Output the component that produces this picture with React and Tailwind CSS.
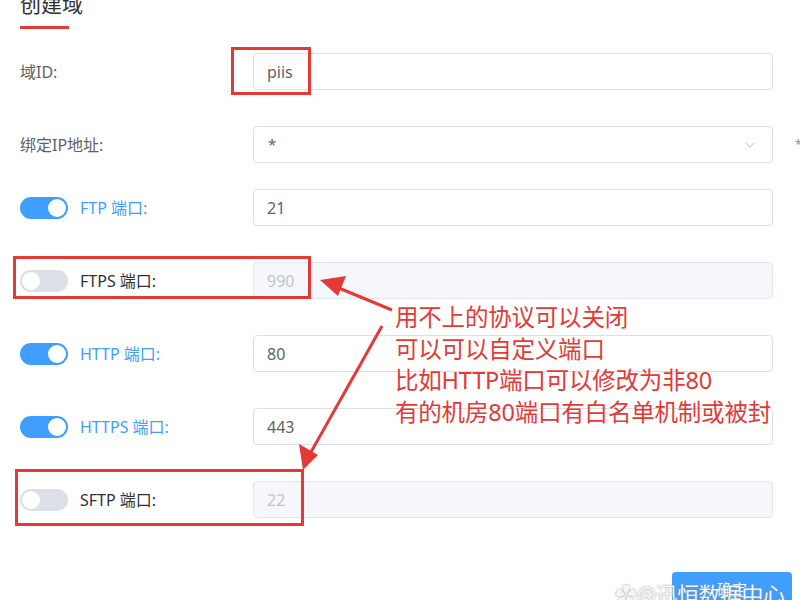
import { ChevronDown } from 'lucide-react'

const font = { fontFamily: '"Noto Sans", "Noto Sans CJK SC", sans-serif' }

const ports = [
  { label: 'FTP 端口:', value: '21', on: true },
  { label: 'FTPS 端口:', value: '990', on: false },
  { label: 'HTTP 端口:', value: '80', on: true },
  { label: 'HTTPS 端口:', value: '443', on: true },
  { label: 'SFTP 端口:', value: '22', on: false },
]

function Toggle({ on }) {
  return (
    <div
      className={`w-[48px] h-[22px] rounded-full flex items-center px-[2px] ${
        on ? 'bg-[#409eff] justify-end' : 'bg-[#dcdfe6] justify-start'
      }`}
    >
      <div className="w-[18px] h-[18px] rounded-full bg-white" />
    </div>
  )
}

function Row({ children, label, className = '' }) {
  return (
    <div className={`flex items-center h-[37px] ${className}`}>
      <div className="w-[233px] flex items-center shrink-0">{label}</div>
      {children}
    </div>
  )
}

export default function App() {
  return (
    <div className="relative w-[800px] h-[600px] overflow-hidden bg-white text-[#606266]" style={font}>
      <div className="pl-5 pr-[27px]">
        {/* 标题 */}
        <div className="-mt-[10px]">
          <h1 className="text-[21px] leading-[28px] text-[#303133]">创建域</h1>
          <div className="w-[49px] h-[3px] bg-[#e53935] mt-[8px]" />
        </div>

        <div className="flex flex-col gap-[36px] mt-[24px]">
          <Row label={<span className="text-[16px]">域ID:</span>}>
            <div className="flex-1 h-full border border-[#dcdfe6] rounded flex items-center px-[13px] text-[16px] text-[#606266]">
              piis
            </div>
          </Row>

          <Row className="-mb-[10px]" label={<span className="text-[16px]">绑定IP地址:</span>}>
            <div className="flex-1 h-full border border-[#dcdfe6] rounded flex items-center justify-between pl-[14px] pr-[14px] text-[15px]">
              <span>*</span>
              <ChevronDown size={16} strokeWidth={1.5} className="text-[#c0c4cc]" />
            </div>
          </Row>

          {ports.map((p) => (
            <Row
              key={p.label}
              label={
                <div className="flex items-center gap-3">
                  <Toggle on={p.on} />
                  <span className={`text-[16px] ${p.on ? 'text-[#409eff]' : 'text-[#303133]'}`}>{p.label}</span>
                </div>
              }
            >
              <div
                className={`flex-1 h-full border rounded flex items-center px-[13px] text-[16px] ${
                  p.on ? 'border-[#dcdfe6] bg-white text-[#606266]' : 'border-[#e4e7ed] bg-[#f5f7fa] text-[#c0c4cc]'
                }`}
              >
                {p.value}
              </div>
            </Row>
          ))}
        </div>
      </div>

      {/* 右侧截断的星号 */}
      <span className="absolute left-[795px] top-[136px] text-[12px] text-[#909399]">*</span>

      {/* 红框标注 */}
      <div className="absolute left-[231px] top-[47px] w-[80px] h-[48px] border-[3px] border-[#e53935]" />
      <div className="absolute left-[13px] top-[256px] w-[298px] h-[43px] border-[3px] border-[#e53935]" />
      <div className="absolute left-[15px] top-[469px] w-[289px] h-[57px] border-[3px] border-[#e53935]" />

      {/* 箭头 */}
      <svg className="absolute inset-0" width="800" height="600">
        <line x1="392" y1="310" x2="334" y2="286" stroke="#e53935" strokeWidth="3" />
        <polygon points="320,280 346,276 338,296" fill="#e53935" />
        <line x1="382" y1="326" x2="311" y2="452" stroke="#e53935" strokeWidth="3" />
        <polygon points="303,470 299,444 318,455" fill="#e53935" />
      </svg>

      {/* 说明文字 */}
      <div className="absolute left-[395px] top-[302px] text-[23.5px] leading-[31.5px] tracking-[-0.2px] text-[#e53935]">
        <p>用不上的协议可以关闭</p>
        <p>可以可以自定义端口</p>
        <p>比如HTTP端口可以修改为非80</p>
        <p>有的机房80端口有白名单机制或被封</p>
      </div>

      {/* 底部按钮 */}
      <div className="absolute left-[672px] top-[572px] w-[120px] h-[40px] rounded bg-[#409eff] text-white text-[15px] flex items-center justify-center pb-[6px]">
        确定
      </div>
      <div className="absolute left-[615px] top-[578px] text-[22px] text-white/90 tracking-tight" style={{ textShadow: '0 0 2px #888' }}>
        ✿@迅恒数据中心
      </div>
    </div>
  )
}
